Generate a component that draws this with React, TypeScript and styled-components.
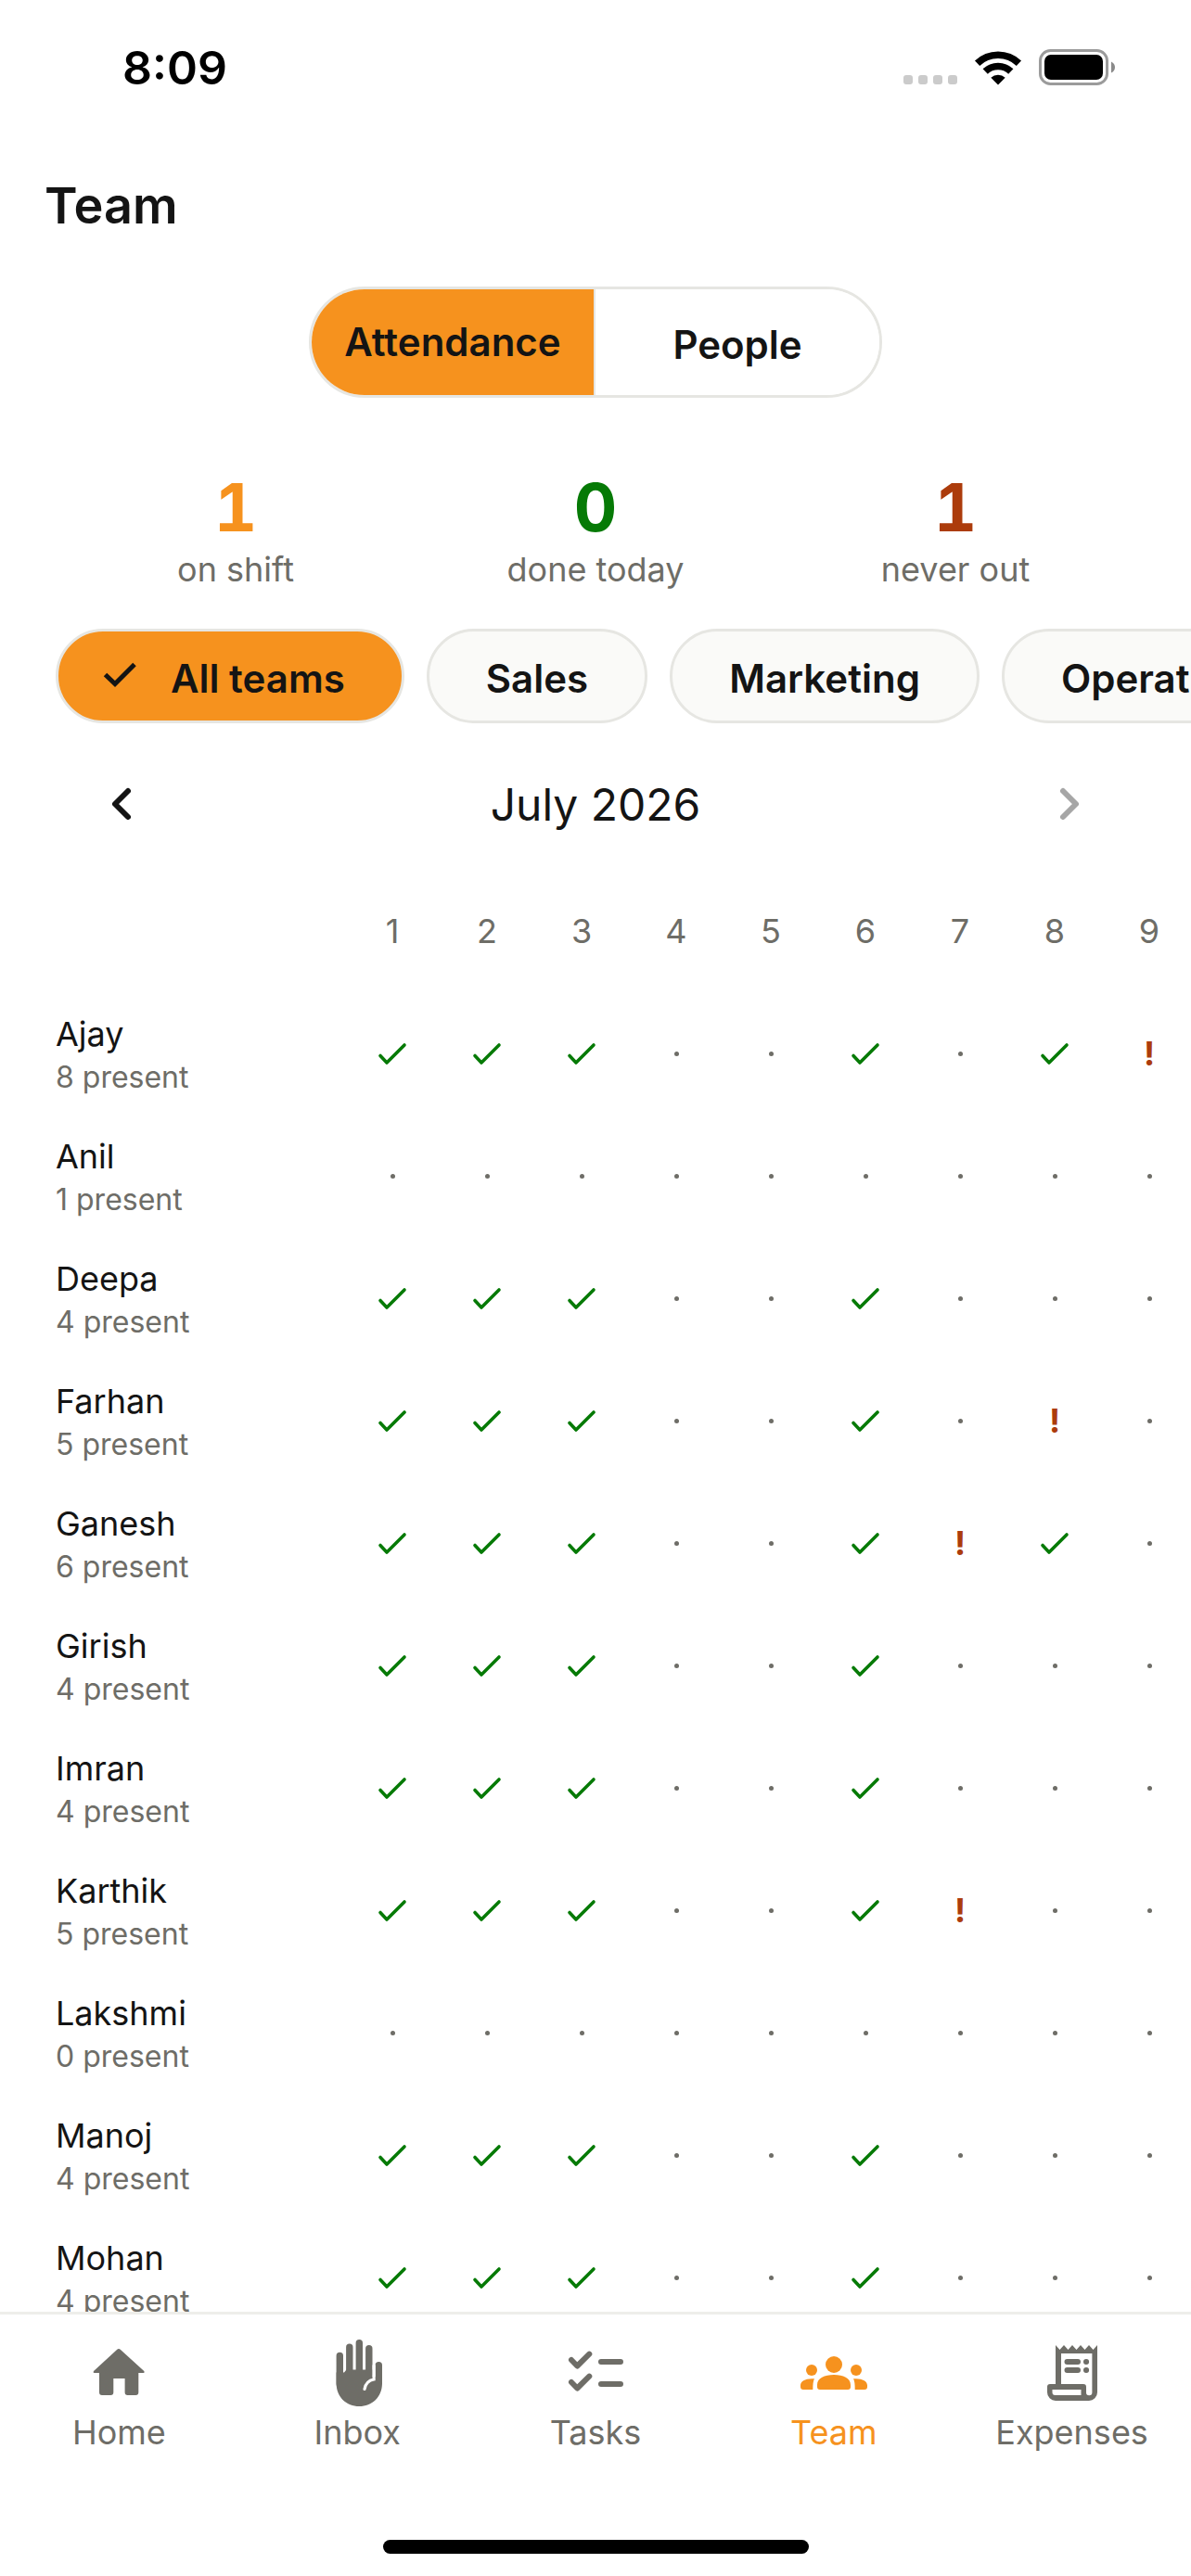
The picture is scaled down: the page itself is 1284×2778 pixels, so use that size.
import React from 'react';
import styled, { createGlobalStyle } from 'styled-components';

const color = {
  ink: '#141414',
  muted: '#6e6d67',
  orange: '#f6921e',
  green: '#067a06',
  rust: '#ac3c0c',
  line: '#e6e6e2',
  chip: '#fafaf8',
};

const GlobalStyle = createGlobalStyle`
  *, *::before, *::after { box-sizing: border-box; }
  html, body, #root { height: 100%; }
  body {
    margin: 0;
    background: #fff;
    color: ${color.ink};
    font-family: Inter, "Liberation Sans", sans-serif;
  }
  button { font: inherit; color: inherit; background: none; border: 0; padding: 0; cursor: pointer; }
  svg { display: block; flex: none; overflow: visible; }
`;

const Screen = styled.div`
  display: flex;
  flex-direction: column;
  height: 100vh;
  overflow: hidden;
  background: #fff;
`;

const StatusBar = styled.div`
  flex: none;
  display: flex;
  justify-content: space-between;
  align-items: center;
  height: 144px;
  padding: 2px 81px 0 132px;
`;

const Clock = styled.time`
  font-size: 50px;
  line-height: 60px;
  font-weight: 600;
  color: #000;
`;

const StatusIcons = styled.div`
  display: flex;
  align-items: center;
  gap: 18px;
`;

const Header = styled.header`
  flex: none;
  padding: 42px 48px 39px;
`;

const Title = styled.h1`
  margin: 0;
  font-size: 54px;
  line-height: 72px;
  font-weight: 600;
`;

const Main = styled.main`
  flex: 1;
  min-height: 0;
  display: flex;
  flex-direction: column;
  overflow: hidden;
`;

const Segments = styled.div`
  flex: none;
  align-self: center;
  display: grid;
  grid-template-columns: 1fr 1fr;
  width: 618px;
  height: 120px;
  margin-top: 12px;
  border: 3px solid ${color.line};
  border-radius: 60px;
  overflow: hidden;
`;

const Segment = styled.button<{ $active?: boolean }>`
  font-size: 42px;
  line-height: 60px;
  font-weight: 600;
  background: ${(p) => (p.$active ? color.orange : '#fff')};
  &:first-child { border-right: 2px solid ${color.line}; }
  & + & { padding-top: 6px; }
`;

const Stats = styled.dl`
  flex: none;
  display: grid;
  grid-template-columns: repeat(3, 1fr);
  margin: 74px 60px 0;
`;

const Stat = styled.div`
  display: flex;
  flex-direction: column-reverse;
  align-items: center;
`;

const StatLabel = styled.dt`
  font-size: 36px;
  line-height: 48px;
  color: ${color.muted};
`;

const StatValue = styled.dd<{ $tone: string }>`
  margin: 0;
  font-size: 72px;
  line-height: 87px;
  font-weight: 700;
  font-variant-numeric: tabular-nums;
  color: ${(p) => p.$tone};
`;

const Chips = styled.div`
  flex: none;
  display: flex;
  gap: 24px;
  margin-top: 40px;
  padding: 0 60px;
  overflow-x: auto;
  scrollbar-width: none;
`;

const Chip = styled.button<{ $active?: boolean }>`
  flex: none;
  display: flex;
  align-items: center;
  gap: 36px;
  height: 102px;
  padding: 0 61px 0 ${(p) => (p.$active ? 45 : 61)}px;
  border: 3px solid ${color.line};
  border-radius: 51px;
  background: ${(p) => (p.$active ? color.orange : color.chip)};
  font-size: 42px;
  line-height: 60px;
  font-weight: 600;
`;

const ChipLabel = styled.span`
  padding-top: 5px;
`;

const MonthBar = styled.div`
  flex: none;
  display: flex;
  align-items: center;
  justify-content: space-between;
  margin-top: 15px;
  padding: 0 60px;
`;

const MonthButton = styled.button`
  display: grid;
  place-items: center;
  width: 142px;
  height: 144px;
  &:disabled { color: #a6a6a6; cursor: default; }
`;

const Month = styled.h2`
  margin: 0;
  padding-top: 2px;
  font-size: 48px;
  line-height: 60px;
  font-weight: 400;
`;

const Sheet = styled.div`
  flex: 1;
  min-height: 0;
  padding-left: 60px;
  overflow: hidden;
`;

const Grid = styled.table`
  table-layout: fixed;
  width: 1230px;
  border-collapse: collapse;
  th, td { padding: 0; }
`;

const NameColumn = styled.col`
  width: 312px;
`;

const DayColumn = styled.col`
  width: 102px;
`;

const Day = styled.th`
  height: 131px;
  padding-bottom: 2px !important;
  font-size: 36px;
  line-height: 48px;
  font-weight: 400;
  color: ${color.muted};
`;

const Person = styled.th`
  height: 132px;
  text-align: left;
  font-weight: 400;
`;

const PersonName = styled.div`
  padding-top: 2px;
  font-size: 36px;
  line-height: 48px;
`;

const PersonTotal = styled.div`
  font-size: 32px;
  line-height: 45px;
  color: ${color.muted};
`;

const Mark = styled.td`
  vertical-align: middle;
  svg { margin: 0 auto; }
`;

const Dot = styled.span`
  display: block;
  width: 5px;
  height: 5px;
  margin: 0 auto;
  border-radius: 50%;
  background: ${color.muted};
`;

const Alert = styled.span`
  display: block;
  text-align: center;
  font-size: 36px;
  line-height: 48px;
  font-weight: 700;
  color: ${color.rust};
`;

const TabBar = styled.nav`
  flex: none;
  display: grid;
  grid-template-columns: repeat(5, 1fr);
  border-top: 3px solid #eeeeea;
  padding-top: 25px;
  background: #fff;
`;

const Tab = styled.a<{ $active?: boolean }>`
  display: flex;
  flex-direction: column;
  align-items: center;
  gap: 4px;
  font-size: 36px;
  line-height: 48px;
  text-decoration: none;
  color: ${(p) => (p.$active ? color.orange : color.muted)};
`;

const HomeIndicator = styled.div`
  flex: none;
  align-self: center;
  width: 459px;
  height: 15px;
  margin: 92px 0 24px;
  border-radius: 8px;
  background: #000;
`;

function SignalIcon() {
  return (
    <svg width="58" height="38" viewBox="0 0 58 38" fill="#cbcbcb" aria-hidden="true">
      {[0, 16, 32, 48].map((x) => (
        <rect key={x} x={x} y="27" width="10" height="10" rx="3" />
      ))}
    </svg>
  );
}

function WifiIcon() {
  return (
    <svg width="52" height="38" viewBox="0 0 52 38" fill="none" stroke="#000" strokeWidth="7.6" aria-hidden="true">
      <path d="M3.6 14.2a32.5 32.5 0 0 1 44.8 0" />
      <path d="M12.2 23a20 20 0 0 1 27.6 0" />
      <path d="M26 37.5l-7.7-7.8a11.4 11.4 0 0 1 15.4 0z" fill="#000" stroke="none" />
    </svg>
  );
}

function BatteryIcon() {
  return (
    <svg width="83" height="40" viewBox="0 0 83 40" aria-hidden="true">
      <rect x="1.5" y="1.5" width="72" height="36" rx="11" fill="none" stroke="#9b9b9b" strokeWidth="3" />
      <rect x="6" y="6" width="63" height="27" rx="7" fill="#000" />
      <path d="M78 13.500q4 2 4 6t-4 6z" fill="#8a8a8a" />
    </svg>
  );
}

function PresentIcon() {
  return (
    <svg width="40" height="40" viewBox="0 0 40 40" fill="none" stroke={color.green} strokeWidth="3.6" strokeLinecap="round" strokeLinejoin="round" aria-hidden="true">
      <path d="M7 22.500l7 7.500L33 11" />
    </svg>
  );
}

function SelectedIcon() {
  return (
    <svg width="40" height="40" viewBox="0 0 40 40" fill="none" stroke={color.ink} strokeWidth="5" aria-hidden="true">
      <path d="M5.500 18.500l10.500 10L37 7.500" />
    </svg>
  );
}

function Chevron({ flip }: { flip?: boolean }) {
  return (
    <svg width="24" height="36" viewBox="0 0 24 36" fill="none" stroke="currentColor" strokeWidth="6" strokeLinecap="round" strokeLinejoin="round" aria-hidden="true">
      <path d={flip ? 'M5 4l14 14L5 32' : 'M19 4L5 18l14 14'} />
    </svg>
  );
}

const tabIcons: Record<string, React.ReactNode> = {
  Home: (
    <path fill="currentColor" d="M9 36 34 13Q36 11.200 38 13L63.300 36Q64.300 38 62.500 38H57.300V59Q57.300 62 54.300 62H45.600Q42.600 62 42.600 59V44H30.300V59Q30.300 62 27.300 62H18Q15 62 15 59V38H9.700Q8 38 9 36z" />
  ),
  Inbox: (
    <>
      <path d="M17.300 50V19.500M27.800 40V10.300M38.300 40V5.800M48.800 40V11.800M59.300 48V29.700" fill="none" stroke="currentColor" strokeWidth="7.400" strokeLinecap="round" />
      <path fill="currentColor" d="M13.600 37.500H22L24.500 34.500H52.500V42H63V49C63 64 52 74 38.300 74S13.600 64 13.600 49z" />
      <path d="M54.100 30V45Q45.500 46.500 44 55.500" fill="none" stroke="#fff" strokeWidth="3.200" strokeLinecap="round" />
    </>
  ),
  Tasks: (
    <path d="M10 24l6.300 6.500L29.300 17.700M10 48l6.300 6.500L29.300 41.700M42 26h21M42 50h21" fill="none" stroke="currentColor" strokeWidth="6" strokeLinecap="round" strokeLinejoin="round" />
  ),
  Team: (
    <g fill="currentColor">
      <circle cx="36" cy="29" r="9" />
      <circle cx="12" cy="35" r="6" />
      <circle cx="60" cy="35" r="6" />
      <path d="M21 56Q18 56 18 53V51C18 43.500 26 40 36 40S54 43.500 54 51V53Q54 56 51 56zM3 56Q0 56 0 53V51.500C0 46.500 6 43.500 15 44.300Q13.300 47 13.300 56zM69 56Q72 56 72 53V51.500C72 46.500 66 43.500 57 44.300Q58.700 47 58.700 56z" />
    </g>
  ),
  Expenses: (
    <>
      <path fill="currentColor" fillRule="evenodd" d="M18 8l4.500 5L27 8l4.500 5L36 8l4.500 5L45 8l4.500 5L54 8l4.500 5L63 8V59a9 9 0 0 1-9 9H18a9 9 0 0 1-9-9V53a3 3 0 0 1 3-3h6zM24 17V50H48a3 3 0 0 1 3 3V59a3.200 3.200 0 0 0 6.400 0V17zM14.500 56v3a3 3 0 0 0 3 3H45.500V56z" />
      <path d="M30.500 26h11.500M30.500 35h11.500M51 26h.1M51 35h.1" stroke="currentColor" strokeWidth="6" strokeLinecap="round" />
    </>
  ),
};

const people: [string, number, string][] = [
  ['Ajay', 8, 'ppp..p.p!'],
  ['Anil', 1, '.........'],
  ['Deepa', 4, 'ppp..p...'],
  ['Farhan', 5, 'ppp..p.!.'],
  ['Ganesh', 6, 'ppp..p!p.'],
  ['Girish', 4, 'ppp..p...'],
  ['Imran', 4, 'ppp..p...'],
  ['Karthik', 5, 'ppp..p!..'],
  ['Lakshmi', 0, '.........'],
  ['Manoj', 4, 'ppp..p...'],
  ['Mohan', 4, 'ppp..p...'],
];

const days = [1, 2, 3, 4, 5, 6, 7, 8, 9];
const teams = ['All teams', 'Sales', 'Marketing', 'Operations'];
const stats: [number, string, string][] = [
  [1, 'on shift', color.orange],
  [0, 'done today', color.green],
  [1, 'never out', color.rust],
];

function DayMark({ value }: { value: string }) {
  if (value === 'p') return <PresentIcon />;
  if (value === '!') return <Alert>!</Alert>;
  return <Dot />;
}

export default function App() {
  return (
    <Screen>
      <GlobalStyle />
      <StatusBar>
        <Clock>8:09</Clock>
        <StatusIcons>
          <SignalIcon />
          <WifiIcon />
          <BatteryIcon />
        </StatusIcons>
      </StatusBar>
      <Header>
        <Title>Team</Title>
      </Header>
      <Main>
        <Segments>
          <Segment $active aria-pressed="true">Attendance</Segment>
          <Segment aria-pressed="false">People</Segment>
        </Segments>
        <Stats>
          {stats.map(([value, label, tone]) => (
            <Stat key={label}>
              <StatLabel>{label}</StatLabel>
              <StatValue $tone={tone}>{value}</StatValue>
            </Stat>
          ))}
        </Stats>
        <Chips>
          {teams.map((team, i) => (
            <Chip key={team} $active={i === 0} aria-pressed={i === 0}>
              {i === 0 && <SelectedIcon />}
              <ChipLabel>{team}</ChipLabel>
            </Chip>
          ))}
        </Chips>
        <MonthBar>
          <MonthButton aria-label="Previous month"><Chevron /></MonthButton>
          <Month>July 2026</Month>
          <MonthButton aria-label="Next month" disabled><Chevron flip /></MonthButton>
        </MonthBar>
        <Sheet>
          <Grid>
            <colgroup>
              <NameColumn />
              {days.map((d) => <DayColumn key={d} />)}
            </colgroup>
            <thead>
              <tr>
                <td />
                {days.map((d) => <Day key={d} scope="col">{d}</Day>)}
              </tr>
            </thead>
            <tbody>
              {people.map(([name, total, marks]) => (
                <tr key={name}>
                  <Person scope="row">
                    <PersonName>{name}</PersonName>
                    <PersonTotal>{total} present</PersonTotal>
                  </Person>
                  {marks.split('').map((m, i) => (
                    <Mark key={i}><DayMark value={m} /></Mark>
                  ))}
                </tr>
              ))}
            </tbody>
          </Grid>
        </Sheet>
      </Main>
      <TabBar>
        {Object.entries(tabIcons).map(([label, icon]) => (
          <Tab key={label} href={`#${label.toLowerCase()}`} $active={label === 'Team'}>
            <svg width="72" height="74" viewBox="0 0 72 74" aria-hidden="true">{icon}</svg>
            {label}
          </Tab>
        ))}
      </TabBar>
      <HomeIndicator />
    </Screen>
  );
}
